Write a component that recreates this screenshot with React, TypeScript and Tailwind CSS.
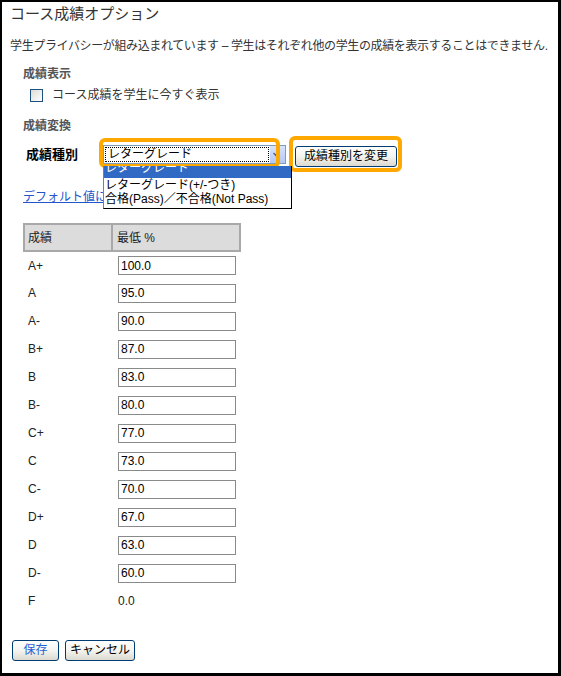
const grades: [string, string][] = [
  ["A+", "100.0"],
  ["A", "95.0"],
  ["A-", "90.0"],
  ["B+", "87.0"],
  ["B", "83.0"],
  ["B-", "80.0"],
  ["C+", "77.0"],
  ["C", "73.0"],
  ["C-", "70.0"],
  ["D+", "67.0"],
  ["D", "63.0"],
  ["D-", "60.0"],
];

const font = { fontFamily: '"Liberation Sans", "Noto Sans CJK JP", sans-serif' };

function XpButton({ label, blue, wide }: { label: string; blue?: boolean; wide?: boolean }) {
  return (
    <button
      className={
        "h-[21px] rounded-[3px] border border-[#003c74] bg-gradient-to-b from-white via-[#f4f4f0] to-[#dcdad0] text-[12px] leading-[19px] text-center " +
        (wide ? "w-[70px] " : "w-[47px] ") +
        (blue ? "text-[#1f63d6]" : "text-black")
      }
    >
      {label}
    </button>
  );
}

export default function App() {
  return (
    <div
      className="w-[561px] h-[676px] bg-white border-t-2 border-l-2 border-r-[3px] border-b-[3px] border-black text-[#222]"
      style={font}
    >
      <div className="pl-[8px] h-[24px] leading-[24px] text-[15px] text-[#333]">コース成績オプション</div>

      <div className="pl-[8px] mt-[12px] h-[16px] leading-[16px] text-[12px] text-[#333] whitespace-nowrap tracking-[-0.37px]">
        学生プライバシーが組み込まれています – 学生はそれぞれ他の学生の成績を表示することはできません.
      </div>

      <div className="pl-[21px] mt-[12px] h-[16px] leading-[16px] text-[12px] font-bold text-[#555]">成績表示</div>

      <div className="pl-[28px] mt-[5px] h-[16px] flex items-center gap-[9px] text-[12px] text-[#333]">
        <span className="w-[13px] h-[13px] border border-[#1c5180] bg-gradient-to-br from-[#dcdcd7] to-white" />
        <span>コース成績を学生に今すぐ表示</span>
      </div>

      <div className="pl-[21px] mt-[15px] h-[16px] leading-[16px] text-[12px] font-bold text-[#555]">成績変換</div>

      <div className="pl-[24px] mt-[10px] h-[21px] flex items-center">
        <div className="w-[77px] text-[13px] font-bold text-black">成績種別</div>

        <div className="relative w-[183px] h-[19px] border border-[#7f9db9] bg-white flex items-center">
          <div className="ml-[1px] flex-1 h-[15px] border border-dotted border-black text-[12px] leading-[13px] pl-[2px] text-black">
            レターグレード
          </div>
          <div className="w-[15px] h-[17px] ml-[1px] bg-gradient-to-b from-[#d9e4fc] to-[#b3c8f5] flex items-center pl-[3px]">
            <svg width="6" height="6" viewBox="0 0 6 6">
              <path d="M0.5 1 L3 3.5 L5.5 1 M3 3.5 L5.5 5.5" fill="none" stroke="#4d6185" strokeWidth="1.5" />
            </svg>
          </div>

          <div className="absolute left-[-5px] top-[-8px] right-[5px] bottom-[-5px] border-[4px] border-[#ffa800] rounded-[6px] pointer-events-none" />

          <div className="absolute left-[-1px] top-[20px] w-[189px] h-[43px] bg-white border border-black border-l-[#7f7f7f] border-t-0 text-[12px] text-black z-10">
            <div className="h-[12px] overflow-hidden bg-[#316ac5] text-white pl-[1px]">
              <div className="leading-[12px] -mt-[4px]">レターグレード</div>
            </div>
            <div className="h-[14px] leading-[14px] pl-[1px]">レターグレード(+/-つき)</div>
            <div className="h-[14px] leading-[14px] pl-[1px]">合格(Pass)／不合格(Not Pass)</div>
          </div>
        </div>

        <div className="relative ml-[9px]">
          <button className="w-[102px] h-[21px] rounded-[3px] border border-[#003c74] bg-gradient-to-b from-white via-[#f4f4f0] to-[#dcdad0] text-[12px] leading-[19px] text-black">
            成績種別を変更
          </button>
          <div className="absolute left-[-6px] top-[-7px] right-[-5px] bottom-[-5px] border-[4px] border-[#ffa800] rounded-[6px] pointer-events-none" />
        </div>
      </div>

      <div className="pl-[21px] mt-[24px] h-[16px] leading-[16px] text-[12px]">
        <a className="text-[#2255cc] underline">デフォルト値に戻す</a>
      </div>

      <table className="ml-[21px] mt-[18px] border-collapse text-[12px] text-[#222]">
        <thead>
          <tr className="h-[27px] bg-[#dcdcdc]">
            <th className="w-[88px] border-2 border-[#a8a8a8] text-left font-normal pl-[3px]">成績</th>
            <th className="w-[128px] border-2 border-[#a8a8a8] text-left font-normal pl-[4px]">最低 %</th>
          </tr>
        </thead>
        <tbody>
          {grades.map(([g, v]) => (
            <tr key={g} className="h-[28px]">
              <td className="pl-[4px]">{g}</td>
              <td className="pl-[6px]">
                <input
                  readOnly
                  value={v}
                  className="block w-[118px] h-[19px] border border-[#8a8a8a] px-[2px] text-[12px] text-black outline-none"
                  style={font}
                />
              </td>
            </tr>
          ))}
          <tr className="h-[28px]">
            <td className="pl-[4px]">F</td>
            <td className="pl-[6px]">0.0</td>
          </tr>
        </tbody>
      </table>

      <div className="pl-[10px] mt-[25px] flex gap-[6px]">
        <XpButton label="保存" blue />
        <XpButton label="キャンセル" wide />
      </div>
    </div>
  );
}
